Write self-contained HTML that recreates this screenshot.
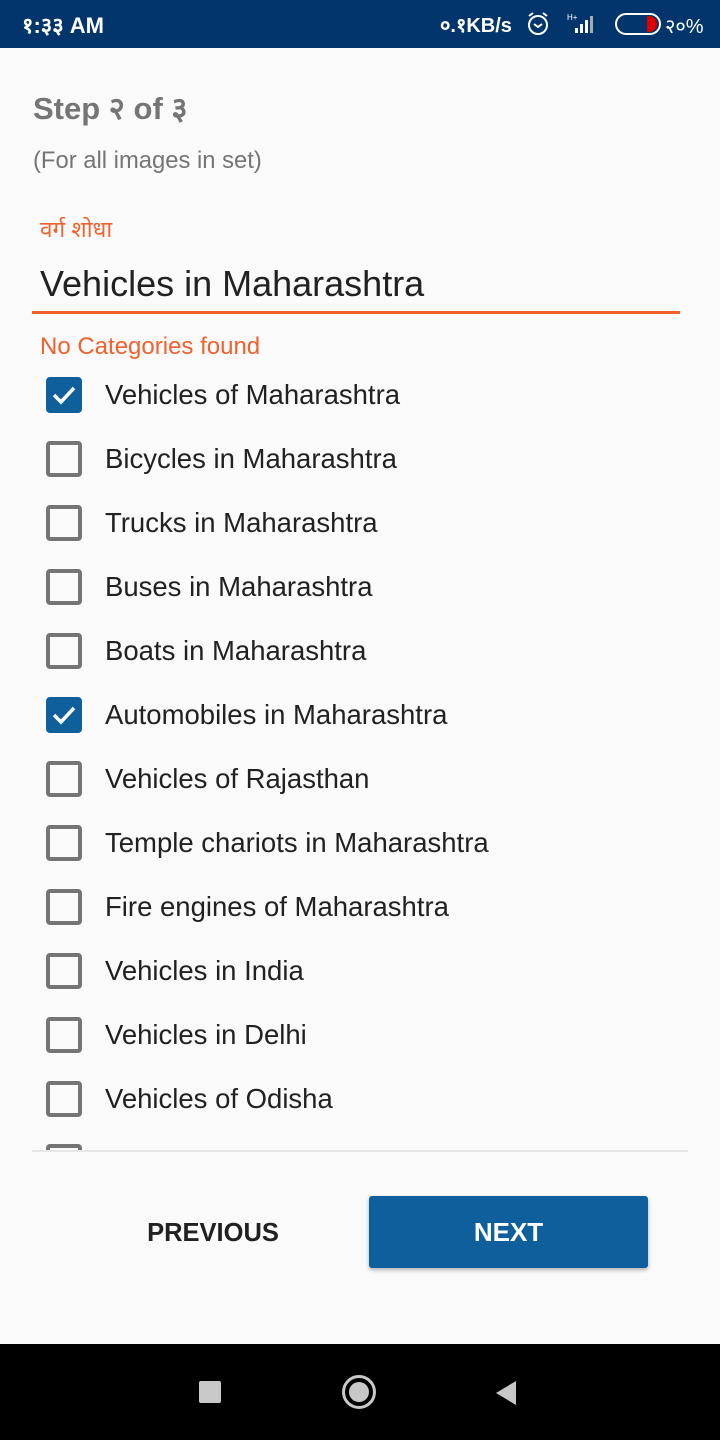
<!DOCTYPE html>
<html><head><meta charset="utf-8"><style>
*{margin:0;padding:0;box-sizing:border-box}
body{width:720px;height:1440px;background:#fafafa;font-family:"Liberation Sans","Noto Sans CJK SC",sans-serif;position:relative;overflow:hidden}
.a{position:absolute;white-space:nowrap}
.cb{position:absolute;left:46px;width:36px;height:36px;border:4px solid #757575;border-radius:4px}
.cb.on{background:#0e5f9b;border-color:#0e5f9b}
.lbl{position:absolute;left:105px;font-size:27.5px;color:#212121;line-height:36px}
</style></head><body>
<div class="a" style="left:0;top:0;width:720px;height:48px;background:#02356b"></div>
<div class="a" style="left:22px;top:10px;font-size:22px;font-weight:bold;color:#fff">१:३३ AM</div>
<div class="a" style="left:440px;top:11px;font-size:20px;font-weight:bold;color:#fff">०.१KB/s</div>
<svg class="a" style="left:526px;top:11px" width="24" height="26"><circle cx="12" cy="14" r="9" fill="none" stroke="#fff" stroke-width="2"/><path d="M8 13l4 3 4-3" fill="none" stroke="#fff" stroke-width="2"/><path d="M3 5l4-3M21 5l-4-3" stroke="#fff" stroke-width="2"/></svg>
<svg class="a" style="left:565px;top:12px" width="40" height="24"><text x="2" y="8" font-size="8" fill="#fff" font-family="Liberation Sans">H+</text><rect x="10" y="16" width="3" height="5" fill="#fff"/><rect x="15" y="12" width="3" height="9" fill="#fff"/><rect x="20" y="8" width="3" height="13" fill="#fff"/><rect x="25" y="4" width="3" height="17" fill="#aaa"/></svg>
<div class="a" style="left:615px;top:13px;width:46px;height:22px;border:2px solid #fff;border-radius:11px"></div>
<div class="a" style="left:647px;top:16px;width:10px;height:16px;background:#d00;border-radius:0 8px 8px 0"></div>
<div class="a" style="left:665px;top:12px;font-size:20px;color:#fff">२०%</div>

<div class="a" style="left:33px;top:87px;font-size:31px;font-weight:bold;color:#757575">Step २ of ३</div>
<div class="a" style="left:33px;top:147px;font-size:23.8px;color:#757575">(For all images in set)</div>
<div class="a" style="left:40px;top:213px;font-size:22.5px;color:#f0612e">वर्ग शोधा</div>
<div class="a" style="left:40px;top:263px;font-size:36px;color:#212121">Vehicles in Maharashtra</div>
<div class="a" style="left:32px;top:311px;width:648px;height:3px;background:#f0612e"></div>
<div class="a" style="left:40px;top:333px;font-size:24px;color:#f0612e">No Categories found</div>

<div class="a" style="left:0;top:360px;width:720px;height:790px;overflow:hidden">
<div class="cb on" style="top:17px"><svg width="28" height="28" style="position:absolute;left:0;top:0"><path d="M4 14l7 7L24 7" fill="none" stroke="#fff" stroke-width="3.5"/></svg></div><div class="lbl" style="top:17px">Vehicles of Maharashtra</div>
<div class="cb" style="top:81px"></div><div class="lbl" style="top:81px">Bicycles in Maharashtra</div>
<div class="cb" style="top:145px"></div><div class="lbl" style="top:145px">Trucks in Maharashtra</div>
<div class="cb" style="top:209px"></div><div class="lbl" style="top:209px">Buses in Maharashtra</div>
<div class="cb" style="top:273px"></div><div class="lbl" style="top:273px">Boats in Maharashtra</div>
<div class="cb on" style="top:337px"><svg width="28" height="28" style="position:absolute;left:0;top:0"><path d="M4 14l7 7L24 7" fill="none" stroke="#fff" stroke-width="3.5"/></svg></div><div class="lbl" style="top:337px">Automobiles in Maharashtra</div>
<div class="cb" style="top:401px"></div><div class="lbl" style="top:401px">Vehicles of Rajasthan</div>
<div class="cb" style="top:465px"></div><div class="lbl" style="top:465px">Temple chariots in Maharashtra</div>
<div class="cb" style="top:529px"></div><div class="lbl" style="top:529px">Fire engines of Maharashtra</div>
<div class="cb" style="top:593px"></div><div class="lbl" style="top:593px">Vehicles in India</div>
<div class="cb" style="top:657px"></div><div class="lbl" style="top:657px">Vehicles in Delhi</div>
<div class="cb" style="top:721px"></div><div class="lbl" style="top:721px">Vehicles of Odisha</div>
<div class="cb" style="top:784px"></div>
</div>
<div class="a" style="left:32px;top:1150px;width:656px;height:2px;background:#e6e6e6"></div>

<div class="a" style="left:80px;top:1219px;width:266px;text-align:center;font-size:25.5px;color:#212121;font-weight:bold">PREVIOUS</div>
<div class="a" style="left:369px;top:1196px;width:279px;height:72px;background:#0e5f9b;border-radius:3px;box-shadow:0 2px 4px rgba(0,0,0,.3);color:#fff;font-size:26px;font-weight:bold;text-align:center;line-height:72px">NEXT</div>

<div class="a" style="left:0;top:1344px;width:720px;height:96px;background:#000"></div>
<div class="a" style="left:199px;top:1381px;width:22px;height:22px;background:#c8c8c8;border-radius:2px"></div>
<div class="a" style="left:342px;top:1375px;width:34px;height:34px;border:3px solid #c8c8c8;border-radius:50%"></div>
<div class="a" style="left:349px;top:1382px;width:20px;height:20px;background:#c8c8c8;border-radius:50%"></div>
<svg class="a" style="left:494px;top:1380px" width="24" height="26"><path d="M22 1L2 13l20 12z" fill="#c8c8c8"/></svg>
</body></html>
